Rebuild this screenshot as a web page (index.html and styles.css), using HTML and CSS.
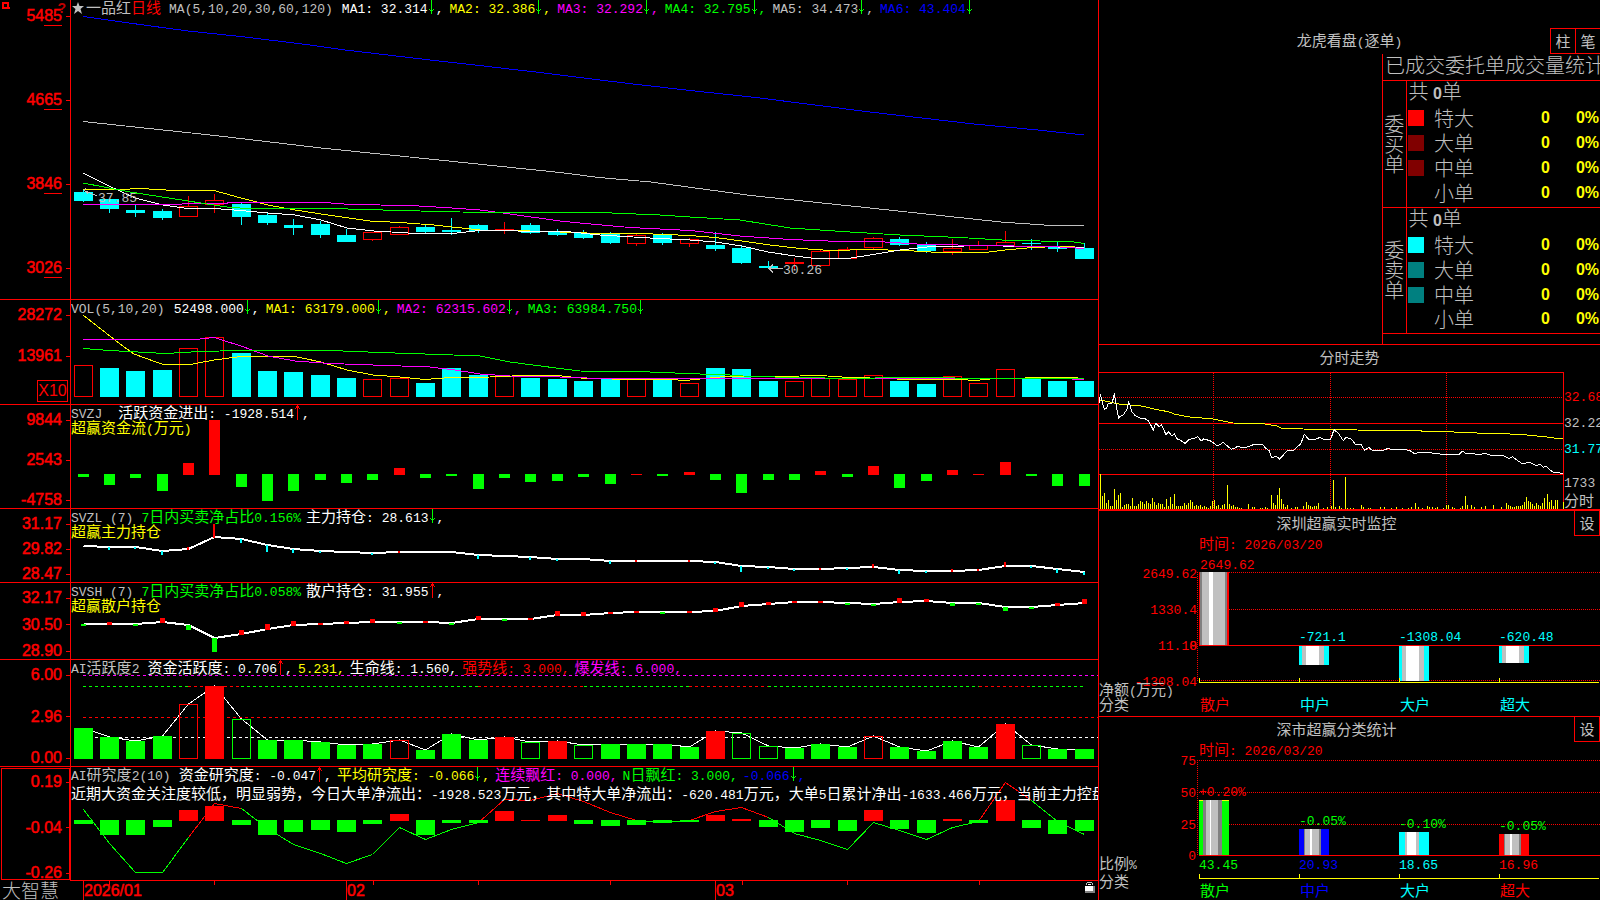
FILE: index.html
```html
<!DOCTYPE html>
<html lang="zh-CN">
<head>
<meta charset="utf-8">
<title>大智慧</title>
<link rel="stylesheet" href="styles.css">
</head>
<body>
<svg width="0" height="0" class="defs">
  <symbol id="down" viewBox="0 0 8 15"><path d="M3 0h1v14h-1zM1 9h1v1h1v1h1v-1h1v-1h1v1h-1v1h-1v2h-1v-2h-1v-1h-1z"/></symbol>
  <symbol id="up" viewBox="0 0 8 15"><path d="M3 0h1v15h-1zM2 1h3v2h-3zM1 3h1v1h-1zM5 3h1v1h-1z"/></symbol>
</svg>
<div class="terminal">
  <main class="charts">
    <section class="panel">
      <div class="axis underlined">
        <svg class="pin" viewBox="0 0 8 8"><path d="M1 1h5v5h-5zM6 6h2" fill="none" stroke="#f00" stroke-width="2"/></svg>
        <span class="help">?</span>
        <span class="tick">54<u>85</u></span><span class="tick">46<u>65</u></span><span class="tick">38<u>46</u></span><span class="tick">30<u>26</u></span>
      </div>
      <svg class="plot" id="price" viewBox="71 0 1027 299" preserveAspectRatio="none"></svg>
      <div class="legend">
        <div class="row averages silver">
          <span class="title stock"><svg class="star" viewBox="0 0 12 12"><path d="M6 0l1.500 4h4.500l-3.500 3 1.500 5-4-3-4 3 1.500-5-3.500-3h4.500z"/></svg><span class="cn">一品红<span class="red">日线</span></span></span>
          <span class="title">MA(5,10,20,30,60,120)</span>
          <span class="white">MA1: 32.314<svg class="arr green"><use href="#down"/></svg>,</span>
          <span class="yellow">MA2: 32.386<svg class="arr green"><use href="#down"/></svg>,</span>
          <span class="magenta">MA3: 32.292<svg class="arr green"><use href="#down"/></svg>,</span>
          <span class="green">MA4: 32.795<svg class="arr green"><use href="#down"/></svg>,</span>
          <span>MA5: 34.473<svg class="arr green"><use href="#down"/></svg>,</span>
          <span class="blue">MA6: 43.404<svg class="arr green"><use href="#down"/></svg></span>
        </div>
      </div>
    </section>

    <section class="panel">
      <div class="axis volume-axis">
        <span class="tick">28272</span><span class="tick">13961</span><span class="unit">X10</span>
      </div>
      <svg class="plot" id="volume" viewBox="71 300 1027 104" preserveAspectRatio="none"></svg>
      <div class="legend">
        <div class="row averages">
          <span class="title silver">VOL(5,10,20)</span>
          <span class="white">52498.000<svg class="arr green"><use href="#down"/></svg>,</span>
          <span class="yellow">MA1: 63179.000<svg class="arr green"><use href="#down"/></svg>,</span>
          <span class="magenta">MA2: 62315.602<svg class="arr green"><use href="#down"/></svg>,</span>
          <span class="green">MA3: 63984.750<svg class="arr green"><use href="#down"/></svg></span>
        </div>
      </div>
    </section>

    <section class="panel">
      <div class="axis"><span class="tick">9844</span><span class="tick">2543</span><span class="tick">-4758</span></div>
      <svg class="plot" id="flow" viewBox="71 405 1027 103" preserveAspectRatio="none"></svg>
      <div class="legend">
        <div class="row"><span class="title wide silver">SVZJ</span><span class="white"><span class="cn">活跃资金进出</span>: -1928.514<svg class="arr red"><use href="#up"/></svg>,</span></div>
        <div class="row yellow"><span><span class="cn">超赢资金流</span>(<span class="cn">万元</span>)</span></div>
      </div>
    </section>

    <section class="panel">
      <div class="axis"><span class="tick">31.17</span><span class="tick">29.82</span><span class="tick">28.47</span></div>
      <svg class="plot" id="main-hold" viewBox="71 509 1027 73" preserveAspectRatio="none"></svg>
      <div class="legend">
        <div class="row"><span class="title silver">SVZL (7)</span><span class="green">7<span class="cn">日内买卖净占比</span>0.156%</span><span class="white"><span class="cn">主力持仓</span>: 28.613<svg class="arr green"><use href="#down"/></svg>,</span></div>
        <div class="row yellow"><span class="cn">超赢主力持仓</span></div>
      </div>
    </section>

    <section class="panel">
      <div class="axis"><span class="tick">32.17</span><span class="tick">30.50</span><span class="tick">28.90</span></div>
      <svg class="plot" id="retail-hold" viewBox="71 583 1027 76" preserveAspectRatio="none"></svg>
      <div class="legend">
        <div class="row"><span class="title silver">SVSH (7)</span><span class="green">7<span class="cn">日内买卖净占比</span>0.058%</span><span class="white"><span class="cn">散户持仓</span>: 31.955<svg class="arr red"><use href="#up"/></svg>,</span></div>
        <div class="row yellow"><span class="cn">超赢散户持仓</span></div>
      </div>
    </section>

    <section class="panel">
      <div class="axis"><span class="tick">6.00</span><span class="tick">2.96</span><span class="tick">0.00</span></div>
      <svg class="plot" id="activity" viewBox="71 660 1027 106" preserveAspectRatio="none"></svg>
      <div class="legend">
        <div class="row">
          <span class="title silver">AI<span class="cn">活跃度</span>2</span>
          <span class="white"><span class="cn">资金活跃度</span>: 0.706<svg class="arr red"><use href="#up"/></svg>,</span>
          <span class="yellow">5.231,</span>
          <span class="white"><span class="cn">生命线</span>: 1.560,</span>
          <span class="red"><span class="cn">强势线</span>: 3.000,</span>
          <span class="magenta"><span class="cn">爆发线</span>: 6.000,</span>
        </div>
      </div>
    </section>

    <section class="panel last">
      <div class="axis selected"><span class="tick">0.19</span><span class="tick">-0.04</span><span class="tick">-0.26</span></div>
      <svg class="plot" id="research" viewBox="71 767 1027 113" preserveAspectRatio="none"></svg>
      <div class="legend roomy">
        <div class="row">
          <span class="title silver">AI<span class="cn">研究度</span>2(10)</span>
          <span class="white"><span class="cn">资金研究度</span>: -0.047<svg class="arr red"><use href="#up"/></svg>,</span>
          <span class="yellow"><span class="cn">平均研究度</span>: -0.066<svg class="arr green"><use href="#down"/></svg>,</span>
          <span class="magenta"><span class="cn">连续飘红</span>: 0.000,</span>
          <span class="green">N<span class="cn">日飘红</span>: 3.000,</span>
          <span class="blue">-0.066<svg class="arr green"><use href="#down"/></svg>,</span>
        </div>
        <div class="row white"><span><span class="cn">近期大资金关注度较低，明显弱势，今日大单净流出：</span>-1928.523<span class="cn">万元，其中特大单净流出：</span>-620.481<span class="cn">万元，大单</span>5<span class="cn">日累计净出</span>-1633.466<span class="cn">万元，当前主力控盘</span></span></div>
      </div>
    </section>

    <footer class="timeline">
      <span class="brand">大智慧</span>
      <svg class="plot" id="dates" viewBox="71 881 1027 19" preserveAspectRatio="none"></svg>
    </footer>
  </main>

  <aside class="side">
    <section class="orders">
      <header class="orders-head">
        <h2><span class="cn">龙虎看盘</span>(<span class="cn">逐单</span>)</h2>
        <div class="modes"><button type="button">柱</button><button type="button">笔</button></div>
      </header>
      <div class="stats-box">
        <table class="stats">
          <caption>已成交委托单成交量统计</caption>
          <colgroup><col class="c-side"><col class="c-mark"><col class="c-name"><col class="c-num"><col></colgroup>
          <tbody>
            <tr><th rowspan="5" class="side-name">委买单</th><td colspan="4" class="total">共 <b>0</b>单</td></tr>
            <tr><td><i class="mark buy"></i></td><td>特大</td><td class="num">0</td><td class="num pct">0%</td></tr>
            <tr><td><i class="mark buy-dim"></i></td><td>大单</td><td class="num">0</td><td class="num pct">0%</td></tr>
            <tr><td><i class="mark buy-dim"></i></td><td>中单</td><td class="num">0</td><td class="num pct">0%</td></tr>
            <tr><td></td><td>小单</td><td class="num">0</td><td class="num pct">0%</td></tr>
          </tbody>
          <tbody>
            <tr><th rowspan="5" class="side-name">委卖单</th><td colspan="4" class="total">共 <b>0</b>单</td></tr>
            <tr><td><i class="mark sell"></i></td><td>特大</td><td class="num">0</td><td class="num pct">0%</td></tr>
            <tr><td><i class="mark sell-dim"></i></td><td>大单</td><td class="num">0</td><td class="num pct">0%</td></tr>
            <tr><td><i class="mark sell-dim"></i></td><td>中单</td><td class="num">0</td><td class="num pct">0%</td></tr>
            <tr><td></td><td>小单</td><td class="num">0</td><td class="num pct">0%</td></tr>
          </tbody>
        </table>
      </div>
    </section>

    <section class="trend">
      <header class="trend-head"><h2 class="cn">分时走势</h2></header>
      <svg class="plot" id="intraday" viewBox="27 96 1395 411" preserveAspectRatio="none"></svg>
      <div class="scale">
        <span class="red">32.68</span><span>32.22</span><span class="cyan">31.77</span><span class="vol">1733</span><span class="cn">分时</span>
      </div>
    </section>

    <section class="monitor">
      <header><h2 class="cn">深圳超赢实时监控</h2><button type="button">设</button></header>
      <svg class="plot" id="netflow" viewBox="1099 536 501 180" preserveAspectRatio="xMinYMin meet"></svg>
    </section>

    <section class="share">
      <header><h2 class="cn">深市超赢分类统计</h2><button type="button">设</button></header>
      <svg class="plot" id="ratio" viewBox="1099 742 501 158" preserveAspectRatio="xMinYMin meet"></svg>
    </section>
  </aside>
</div>
<script src="charts.js"></script>
</body>
</html>
```

FILE: styles.css
```css
* { box-sizing: border-box; }

body {
  margin: 0;
  background: #000;
  color: #c0c0c0;
  font-family: "Liberation Mono", "Noto Sans CJK SC", monospace;
  font-size: 13px;
}

h2 { margin: 0; font-size: 13px; font-weight: 400; }
.cn, h2.cn { font-family: "Noto Sans CJK SC", sans-serif; font-size: 15px; font-weight: 400; }

.red { color: #f00; fill: #f00; }
.green { color: #0f0; fill: #0f0; }
.blue { color: #00f; }
.cyan { color: #0ff; }
.yellow { color: #ff0; }
.magenta { color: #f0f; }
.white { color: #fff; }
.silver { color: #c0c0c0; }

.defs { position: absolute; }

.terminal {
  display: grid;
  grid-template-columns: minmax(0, 1099fr) minmax(0, 501fr);
  grid-template-rows: minmax(0, 1fr);
  height: 100vh;
}

/* Indicator panels */
.charts {
  display: grid;
  grid-template-rows:
    minmax(0, 300fr) minmax(0, 105fr) minmax(0, 104fr) minmax(0, 74fr)
    minmax(0, 77fr) minmax(0, 107fr) minmax(0, 114fr) minmax(0, 19fr);
  border-right: 1px solid #f00;
  min-width: 0;
  min-height: 0;
}

.panel {
  display: grid;
  grid-template-columns: 71px minmax(0, 1fr);
  grid-template-rows: minmax(0, 1fr);
  min-height: 0;
  border-bottom: 1px solid #f00;
}

.panel.last { border-bottom: 0; }
.panel.last .legend { border-bottom: 1px solid #f00; }

.axis {
  position: relative;
  display: flex;
  flex-direction: column;
  align-items: flex-end;
  justify-content: space-between;
  padding-top: 7px;
  border-right: 1px solid #f00;
  color: #f00;
  font-family: "Liberation Sans", sans-serif;
  font-size: 16px;
}

.underlined { padding: 8px 0 23px; }
.selected { outline: 1px solid #f00; outline-offset: -2px; }

.tick {
  display: flex;
  align-items: center;
  height: 16px;
  line-height: 16px;
  -webkit-text-stroke: 0.5px #f00;
}

.tick::after {
  content: "";
  width: 4px;
  height: 1px;
  margin-left: 4px;
  background: #f00;
}

.tick u {
  text-decoration: none;
  height: 16px;
  box-shadow: 0 1px 0 #000, 0 2px 0 #f00;
}

.volume-axis { justify-content: flex-start; }
.volume-axis .tick + .tick { margin-top: 25px; }
.unit {
  width: 31px;
  height: 22px;
  margin: auto 2px 2px 0;
  border: 1px solid #f00;
  line-height: 20px;
  text-align: center;
}

.pin { position: absolute; left: 2px; top: 2px; width: 8px; height: 8px; }
.help {
  position: absolute;
  right: 4px;
  top: 1px;
  color: #c00000;
  font-weight: 700;
  font-size: 14px;
  line-height: 14px;
}

.plot {
  grid-area: 1 / 2;
  display: block;
  width: 100%;
  height: 100%;
  min-height: 0;
  shape-rendering: crispEdges;
  overflow: hidden;
}
.panel.last .plot { height: calc(100% - 1px); }

.legend {
  grid-area: 1 / 2;
  z-index: 1;
  overflow: hidden;
  white-space: nowrap;
}

.row {
  display: flex;
  align-items: baseline;
  gap: 5px;
  height: 15px;
  line-height: 13px;
}
.row::before { content: ""; width: 0; height: 13px; margin-right: -5px; }
.row.averages { gap: 6px; }
.row.averages::before { margin-right: -6px; }

.roomy .row + .row { margin-top: 4px; }
.title { margin-right: 3px; }
.title.wide { margin-right: 11px; }
.title.stock { margin-right: 2px; }
.star { width: 12px; height: 12px; margin: 0 2px 0 1px; fill: #c0c0c0; vertical-align: -1px; }
.arr { width: 8px; height: 15px; vertical-align: -2px; shape-rendering: crispEdges; }

.timeline {
  display: grid;
  grid-template-columns: 71px minmax(0, 1fr);
  grid-template-rows: minmax(0, 1fr);
  min-height: 0;
}

.brand {
  font-family: "Noto Sans CJK SC", sans-serif;
  font-weight: 300;
  font-size: 19px;
  line-height: 18px;
  padding-left: 2px;
}

svg text { font-family: "Liberation Mono", monospace; font-size: 13px; white-space: pre; }
svg .han { font-family: "Noto Sans CJK SC", sans-serif; font-size: 15px; }
svg .date { font-family: "Liberation Sans", sans-serif; font-size: 16px; stroke: #f00; stroke-width: 0.5px; }

/* Side column */
.side {
  display: grid;
  grid-template-rows: minmax(0, 345fr) minmax(0, 166fr) minmax(0, 206fr) minmax(0, 183fr);
  min-width: 0;
  min-height: 0;
}

.side button {
  height: 25px;
  padding: 0;
  background: #000;
  border: 1px solid #f00;
  color: #c0c0c0;
  font-family: "Noto Sans CJK SC", sans-serif;
  font-size: 15px;
  line-height: 20px;
}

.orders {
  display: flex;
  flex-direction: column;
  padding-top: 28px;
  border-bottom: 1px solid #f00;
  overflow: hidden;
}

.orders-head {
  display: grid;
  grid-template-columns: 1fr auto 1fr;
  align-items: center;
  height: 26px;
  flex: none;
}
.orders-head h2 { grid-column: 2; line-height: 20px; }
.modes { grid-column: 3; display: flex; justify-content: flex-end; }
.modes button { width: 25px; height: 26px; border-right: 0; }

.stats-box {
  align-self: flex-end;
  width: 218px;
  flex: 1;
  border-left: 1px solid #f00;
}

.stats {
  width: 100%;
  border-collapse: collapse;
  table-layout: fixed;
  font-family: "Noto Sans CJK SC", sans-serif;
  font-weight: 300;
  font-size: 20px;
  line-height: 20px;
}
.stats caption { height: 26px; padding-left: 2px; line-height: 22px; text-align: left; white-space: nowrap; }
.stats tbody { border-top: 1px solid #f00; border-bottom: 1px solid #f00; }
.stats tr { height: 25px; }
.stats td, .stats th { padding: 0; height: 25px; font-weight: 300; white-space: nowrap; }
.stats td { padding-bottom: 3px; }
.stats .side-name {
  border-right: 1px solid #f00;
  white-space: normal;
  word-break: break-all;
}
.stats .total { padding-left: 2px; }
.c-side { width: 23px; }
.c-mark { width: 28px; }
.c-name { width: 60px; }
.c-num { width: 56px; }
.stats .num, .stats b { font-family: "Liberation Sans", sans-serif; font-weight: 700; font-size: 16px; }
.stats .num { color: #ff0; text-align: right; }
.stats .pct { padding-right: 6px; }
.mark { display: block; width: 16px; height: 16px; margin-left: 1px; }
.buy { background: #f00; }
.buy-dim { background: #800000; }
.sell { background: #0ff; }
.sell-dim { background: #008080; }

.trend {
  display: grid;
  grid-template-columns: minmax(0, 1fr) 36px;
  grid-template-rows: 27px minmax(0, 1fr);
  border-bottom: 2px solid #f00;
}

.trend-head { grid-column: 1 / 3; text-align: center; line-height: 24px; }
.trend .plot { grid-area: 2 / 1; }

.scale {
  grid-area: 2 / 2;
  display: flex;
  flex-direction: column;
  gap: 10px;
  padding-top: 18px;
  line-height: 16px;
  overflow: hidden;
}
.scale span { height: 16px; }
.scale .vol { margin-top: 8px; }
.scale .cn { margin-top: -10px; }

.monitor, .share {
  display: grid;
  grid-template-columns: minmax(0, 1fr);
  grid-template-rows: 25px minmax(0, 1fr);
}
.monitor { border-bottom: 1px solid #f00; }
.monitor header, .share header { display: flex; }
.monitor h2, .share h2 { flex: 1; text-align: center; line-height: 24px; }
.monitor button, .share button { width: 26px; border-top: 0; }
.monitor .plot, .share .plot { grid-area: 2 / 1; }
```

FILE: charts.js
```js
const NS = "http://www.w3.org/2000/svg";
const RED = "#f00", GREEN = "#0f0", CYAN = "#0ff", BLUE = "#00f";
const YELLOW = "#ff0", MAGENTA = "#f0f", WHITE = "#fff", SILVER = "#c0c0c0", GRAY = "#808080";

const byId = id => document.getElementById(id);
const cx = i => Math.floor(83.2 + 26.34 * i);

function add(svg, tag, attrs, content) {
  const el = document.createElementNS(NS, tag);
  for (const key in attrs) el.setAttribute(key, attrs[key]);
  if (content !== undefined) el.textContent = content;
  svg.appendChild(el);
  return el;
}
const box = (svg, x, y, w, h, fill) => add(svg, "rect", { x, y, width: w, height: h, fill });
const hollow = (svg, x, y, w, h, stroke, fill = "none") =>
  add(svg, "rect", { x: x + 0.5, y: y + 0.5, width: w - 1, height: h - 1, stroke, fill });
const line = (svg, points, stroke, width = 1) =>
  add(svg, "polyline", { points, stroke, fill: "none", "stroke-width": width });
const dashed = (svg, x1, y1, x2, y2, stroke, dash) =>
  add(svg, "line", { x1, y1, x2, y2, stroke, "stroke-dasharray": dash });
const series = ys => ys.map((y, i) => cx(i) + 0.5 + "," + y).join(" ");
const label = (svg, x, y, text, fill, cls = "", anchor = "start") =>
  add(svg, "text", { x, y, fill, class: cls, "text-anchor": anchor }, text);

/* Candles: colour, body top, body bottom, high, low */
const candles = [
  "c 192 201 190 202", "c 199 209 199 213", "c 210 213 205 217", "c 211 218 209 220", "r 206 217 196 217",
  "r 200 205 194 213", "c 204 217 202 225", "c 215 223 213 225", "c 225 228 219 235", "c 224 235 221 238",
  "c 235 242 229 242", "r 232 240 232 241", "r 227 235 226 235", "c 227 232 225 233", "c 230 232 218 235",
  "c 225 231 224 233", "r 229 230 222 234", "c 225 233 223 234", "c 232 235 229 236", "c 233 238 230 239",
  "c 234 243 232 244", "r 235 244 233 246", "c 234 243 233 245", "r 239 244 238 247", "c 245 249 232 251",
  "c 248 263 246 264", "c 266 268 261 268", "f 262 264 258 269", "r 251 266 249 267", "r 249 259 247 259",
  "r 238 248 237 249", "c 239 245 237 246", "c 244 251 242 253", "r 248 252 239 255", "r 245 250 241 250",
  "r 242 246 231 246", "c 243 244 239 250", "c 247 249 242 252", "c 248 259 243 259"
];
const price = byId("price");
candles.forEach((row, i) => {
  const [kind, ...v] = row.split(" ");
  const [top, bottom, high, low] = v.map(Number);
  const color = kind === "c" ? CYAN : RED;
  box(price, cx(i), high, 1, low - high, color);
  if (kind === "r" && bottom - top > 2) hollow(price, cx(i) - 9, top, 19, bottom - top, color, "#000");
  else box(price, cx(i) - 9, top, 19, bottom - top, color);
});
line(price, "83,16.5 140,24.5 188,31 245,37 310,45 345,50 430,60 475,65 518,70 540,72.500 600,80 633,84 695,91 756,97.500 870,112 974,124 1038,130 1084,135", BLUE);
line(price, "83,121.500 215,135.500 321,148 434,159.500 560,172.500 599,177.500 651,182 751,195.500 870,208 1001,222 1051,225.500 1084,225.500", SILVER);
line(price, "83,189.500 120,189.500 140,188.500 175,190.500 214,190.500 241,198 268,205 295,210 321,214 370,221 400,222.500 434,225 480,230 500,230.500 530,231 560,232 600,233.500 640,233.500 690,235.500 715,237.500 742,241 770,245 800,248.500 830,250.500 870,249.500 905,250.500 940,252.500 985,252.500 1005,250 1027,248 1055,246.500 1070,246.500 1084,248", YELLOW);
line(price, "83,173 109,186 135,198 163,205 188,208.500 214,208.500 241,210.500 268,213 295,215 321,220 347,228 374,231 400,232.500 416,233.500 452,233.500 480,230.500 506,230.500 530,231.500 566,231.500 600,235 650,238 690,240 715,242 742,246 768,252 795,256 815,258.500 848,258.500 870,255 900,250 927,247 940,246.500 990,245.500 1016,246.500 1058,247 1084,248", WHITE);
line(price, "83,204.500 170,204.500 195,203.500 225,203.500 230,202.500 325,202.500 350,204.500 410,205.500 445,207.500 480,210 510,214 560,221 580,223 630,227.500 690,230.500 740,236 790,239.500 840,241.500 885,242 925,244.500 990,245.500 1060,247 1084,248.500", MAGENTA);
line(price, "83,183 130,192 188,201 230,207.500 250,208.500 330,208.500 400,210.500 460,212 560,212.500 600,212.500 660,215 690,217 740,220 790,228 850,232 900,235 960,237.500 1010,240.500 1070,241.500 1084,243.500", GREEN);
line(price, "84,190.500 90,193 97,196", SILVER);
line(price, "86,188 84,190 88,194", SILVER);
label(price, 98, 202, "37.85", SILVER);
line(price, "769,268.500 783,268.500", SILVER);
line(price, "773,264.500 769,268.500 773,272.500", SILVER);
label(price, 783, 274, "30.26", SILVER);

/* Volume */
const volume = byId("volume");
const volTops = [365, 368, 371, 370, 348, 337, 353, 371, 372, 375, 378, 379, 378, 383, 368, 375, 376, 378, 379, 381, 378, 379, 380, 383, 368, 369, 381, 381, 378, 379, 375, 381, 384, 376, 383, 369, 378, 381, 381];
volTops.forEach((top, i) => {
  const down = i > 0 && candles[i][0] === "c";
  if (down) box(volume, cx(i) - 9, top, 19, 397 - top, CYAN);
  else hollow(volume, cx(i) - 9, top, 19, 397 - top, RED);
});
line(volume, "83,315 120,344 134,354 163,364.500 190,364.500 214,360 241,356.500 295,356.500 321,362 347,370 373,375 400,377 425,379.500 450,377.500 490,377 512,376 550,375.500 562,376 580,378 598,378.500 625,379.500 670,379.500 685,380.500 700,379 720,377 765,376.500 800,376 820,375.500 842,377 870,378 910,379.500 960,379.500 975,380.500 990,379 1005,378.500 1045,377.500 1072,377.500 1084,378.500", YELLOW);
line(volume, "83,339.500 195,339.500 214,337.500 241,346 268,356 295,361 330,363.500 430,367 455,370 480,374 510,376 560,377 600,378.500 730,378.500 760,378.500 1060,378.500 1084,379.500", MAGENTA);
line(volume, "83,348.500 110,350.500 165,353.500 200,351.500 240,350.500 330,350.500 380,352.500 440,354.500 480,356 510,362 560,368.500 580,371 650,372 700,374 730,375 750,376.500 800,377.500 850,378.500 900,377.500 940,377.500 970,378.500 1084,378.500", GREEN);

/* Diverging bars around a zero line */
function diverging(svg, zero, half, ends) {
  ends.forEach((end, i) => {
    const up = end <= zero;
    box(svg, cx(i) - half, up ? end : zero, half * 2 + 1, up ? zero + 1 - end : end - zero, up ? RED : GREEN);
  });
}
diverging(byId("flow"), 474, 5, [477, 485, 478, 491, 463, 420, 487, 501, 491, 480, 483, 480, 468, 478, 476, 489, 478, 482, 481, 477, 484, 474, 476, 472, 480, 493, 480, 480, 471, 477, 466, 488, 481, 470, 474, 462, 476, 486, 486]);

/* Holding curves with change marks: negative marks rise above the curve */
function holding(svg, ys, marks, width, rise, fall) {
  line(svg, series(ys), WHITE, 2);
  marks.forEach((m, i) => {
    if (m) box(svg, cx(i) - (width >> 1), m < 0 ? Math.round(ys[i]) + m : Math.round(ys[i]), width, Math.abs(m) + 1, m < 0 ? rise : fall);
  });
}
holding(byId("main-hold"),
  [546, 547, 547, 551, 549, 537, 539, 545, 549, 551, 552, 553, 552, 552, 552, 555, 556, 557, 559, 559, 561, 561, 561, 561, 562, 566, 567, 569, 569, 568, 567, 570, 571, 571, 570, 566, 566, 569, 572],
  [0, 2, 1, 3, -2, -13, 3, 6, 3, 1, 0, 1, -1, 0, 0, 3, 0, 2, 1, 0, 2, -1, 0, -1, 1, 5, 1, 1, -1, 1, -3, 3, 1, -2, -1, -4, 1, 3, 2], 2, RED, CYAN);
holding(byId("retail-hold"),
  [624, 624, 624, 622, 625, 638, 634, 629, 625, 624, 623, 622, 622, 622, 623, 619, 619, 619, 615, 615, 613, 612, 612, 612, 611, 606, 604, 602, 602, 603, 604, 602, 601, 603, 603, 607, 607, 605, 603],
  [1, -2, 1, -4, 4, 13, -4, -5, -4, -1, -2, -3, 1, -1, 1, -3, 1, -1, -4, -3, -1, -1, 1, -1, -3, -4, -2, -1, -1, 1, 1, -4, -2, 2, 1, 3, 1, -2, -4], 5, RED, GREEN);

/* Activity */
const activity = byId("activity");
const actTops = [728, 737, 741, 736, 704, 686, 719, 740, 740, 742, 745, 744, 740, 750, 734, 740, 737, 742, 741, 745, 744, 744, 744, 747, 731, 733, 746, 748, 744, 747, 736, 747, 751, 741, 747, 724, 745, 749, 749];
const actKinds = "GGGGrRgGGGGGrGGGRgRgGGGGRggGGGrGGGGRgGG";
dashed(activity, 83, 737.5, 1098, 737.5, WHITE, "3 3");
line(activity, series(actTops), WHITE);
dashed(activity, 83, 675.5, 1098, 675.5, MAGENTA, "3 3");
dashed(activity, 83, 717.5, 1098, 717.5, RED, "3 3");
const spans = [83, 188, 241, 478, 584, 689, 768, 979, 1032, 1084];
[GREEN, RED, GREEN, RED, GREEN, RED, GREEN, RED, GREEN].forEach((color, i) =>
  dashed(activity, spans[i], 686.5, spans[i + 1], 686.5, color, "3 3"));
actTops.forEach((top, i) => {
  const kind = actKinds[i];
  const color = kind.toLowerCase() === "r" ? RED : GREEN;
  if (kind === kind.toUpperCase()) box(activity, cx(i) - 9, top, 19, 759 - top, color);
  else hollow(activity, cx(i) - 9, top, 19, 759 - top, color);
});

/* Research */
const research = byId("research");
const resLine = [809, 843, 872, 872, 837, 803, 808, 828, 844, 853, 863, 854, 827, 839, 829, 822, 799, 800, 793, 801, 812, 820, 822, 820, 811, 807, 817, 833, 840, 849, 822, 830, 839, 827, 821, 782, 800, 821, 834];
[[0, 4, GREEN], [4, 6, RED], [6, 15, GREEN], [15, 21, RED], [21, 23, GREEN], [23, 26, RED], [26, 34, GREEN], [34, 36, RED], [36, 38, GREEN]].forEach(([a, b, color]) => {
  let points = "";
  for (let i = a; i <= b; i++) points += cx(i) + ".5," + resLine[i] + ".5 ";
  line(research, points, color);
});
diverging(research, 820, 9, [824, 835, 835, 827, 810, 806, 825, 835, 832, 830, 832, 824, 814, 835, 823, 823, 811, 820, 815, 824, 826, 825, 823, 822, 815, 819, 827, 832, 828, 831, 810, 829, 833, 819, 823, 800, 828, 834, 831]);

/* Date axis */
const dates = byId("dates");
[[83, "2026/01"], [346, "02"], [715, "03"]].forEach(([x, text]) => {
  box(dates, x, 881, 1, 19, RED);
  label(dates, x + 1, 896, text, RED, "date");
});
[109, 214, 373, 478, 610, 742, 847, 979].forEach(x => box(dates, x, 881, 1, 4, RED));
add(dates, "path", { d: "M1087 882h5v1h-5zM1086 883h1v2h-1zM1092 883h1v2h-1z", fill: SILVER });
add(dates, "path", { d: "M1085 886h10v7h-10z", fill: GRAY });
add(dates, "path", { d: "M1085 886h8v5h-8zM1088 884h3v1h-3z", fill: WHITE });

/* Intraday trend, three units to a pixel */
const intra = byId("intraday");
const W = 3;
const dot = (x1, y1, x2, y2) => add(intra, "line", { x1, y1, x2, y2, stroke: RED, "stroke-width": W, "stroke-dasharray": "3 3" });
dot(27, 172.5, 1420, 172.5);
dot(27, 328.5, 1420, 328.5);
[370.5, 721.5, 1069.5].forEach(x => dot(x, 99, x, 507));
box(intra, 27, 96, 1395, 3, RED);
box(intra, 27, 249, 1395, 3, RED);
box(intra, 27, 402, 1395, 3, RED);
box(intra, 1419, 96, 3, 411, RED);
const opening = [106, 40, 49, 19, 28, 9, 9, 61, 28, 43, 49, 6, 13, 16, 16, 9, 34, 10, 10, 16, 25, 22, 16, 25, 19, 16, 34, 22, 13, 19, 16, 16, 7, 31, 10, 37, 16, 46, 10, 9, 9, 10, 19, 13, 19, 28, 22, 10, 13, 10, 13, 7, 10, 7, 3, 10, 25, 28, 10, 13, 3, 13, 16];
opening.forEach((h, i) => box(intra, 30 + 6 * i, 507 - h, 3, h, YELLOW));
const later = "412:73 418:16 424:10 430:13 436:6 442:6 448:4 454:3 475:16 487:6 493:6 511:4 517:4 526:6 532:3 544:43 550:19 556:13 562:43 568:64 574:31 580:16 586:5 592:13 604:3 616:7 622:5 640:8 649:22 655:13 661:10 667:7 673:9 679:9 685:19 700:3 712:5 724:10 730:88 736:5 748:10 754:4 766:97 772:4 781:4 790:3 814:13 820:7 835:3 841:4 871:7 883:7 905:3 919:7 937:4 955:4 964:6 976:19 985:7 997:3 1012:10 1018:5 1027:7 1036:4 1042:5 1060:3 1069:13 1075:13 1087:7 1093:4 1111:4 1117:9 1126:40 1132:13 1144:13 1153:6 1174:7 1186:10 1210:13 1234:6 1249:19 1255:13 1261:10 1267:7 1273:5 1279:9 1285:9 1291:10 1297:13 1303:22 1309:37 1315:25 1321:22 1327:16 1333:10 1339:19 1345:13 1351:10 1357:19 1363:34 1372:46 1378:22 1384:28 1390:10 1396:28 1402:28 1420:22";
later.split(" ").forEach(pair => {
  const [x, h] = pair.split(":").map(Number);
  box(intra, Math.floor(x / 3) * 3, 507 - h, 3, h, YELLOW);
});
line(intra, "28,180 60,186 90,193 150,197 200,209 235,215 255,223 300,231 370,237 430,249 520,251 560,258 575,265 640,267 800,270 955,272 1070,275 1160,279 1260,282 1310,285 1370,291 1400,295 1420,296", YELLOW, W);
line(intra, "28,190 31,163 35,180 40,200 44,208 50,205 55,190 62,192 67,188 73,160 77,185 82,215 86,234 92,228 100,224 110,210 116,188 120,195 125,215 135,226 150,234 165,236 175,243 185,260 190,271 197,250 208,260 214,255 222,270 228,285 235,275 246,288 253,282 262,297 272,301 285,310 297,298 312,296 323,290 334,303 341,297 360,302 372,310 383,318 400,307 412,318 424,328 436,324 442,319 460,323 475,320 490,314 518,314 527,325 538,332 544,352 560,350 569,357 580,345 592,331 612,330 620,322 632,312 643,283 655,297 672,300 690,292 705,300 722,298 732,269 745,280 760,302 768,292 785,298 797,314 812,312 824,331 836,322 845,330 880,331 894,325 912,330 940,328 960,332 972,340 1000,337 1040,340 1060,344 1105,345 1117,333 1128,341 1150,341 1165,345 1185,340 1200,345 1240,347 1257,356 1268,350 1280,360 1295,370 1320,368 1340,378 1350,372 1360,382 1367,378 1380,390 1390,397 1418,400", WHITE, W);

/* Cylinder bars: bands of [width, colour] from left to right */
function cylinder(svg, x, top, bottom, bands) {
  bands.forEach(([w, color]) => {
    box(svg, x, top, w, bottom - top, color);
    x += w;
  });
}
const cyanBands = [[3, CYAN], [4, SILVER], [13, WHITE], [5, SILVER], [5, CYAN]];

const net = byId("netflow");
label(net, 1199, 549, "时间", RED, "han");
label(net, 1229, 549, ": 2026/03/20", RED);
label(net, 1200, 569, "2649.62", RED);
[["2649.62", 578], ["1330.4", 614], ["11.18", 650], ["0", 650], ["-1308.04", 686]].forEach(([t, y]) =>
  label(net, 1197, y, t, RED, "", "end"));
dashed(net, 1197.5, 572, 1197.5, 680, RED, "1 1");
dashed(net, 1229, 572.5, 1600, 572.5, RED, "1 1");
dashed(net, 1229, 609.5, 1600, 609.5, RED, "1 1");
dashed(net, 1197, 680.5, 1600, 680.5, RED, "1 1");
cylinder(net, 1199, 572, 645, [[1, RED], [2, GRAY], [7, SILVER], [4, WHITE], [12, SILVER], [2, GRAY], [2, RED]]);
box(net, 1199, 645, 401, 1, RED);
[[1299, 665, "-721.1"], [1399, 681, "-1308.04"], [1499, 663, "-620.48"]].forEach(([x, bottom, t]) => {
  cylinder(net, x, 646, bottom, cyanBands);
  label(net, x, 641, t, CYAN);
});
box(net, 1199, 682, 400, 1, YELLOW);
[["散户", RED], ["中户", CYAN], ["大户", CYAN], ["超大", CYAN]].forEach(([t, color], i) => {
  box(net, 1199 + 100 * i, 678, 1, 4, YELLOW);
  label(net, 1200 + 100 * i, 710, t, color, "han");
});
label(net, 1099, 695, "净额", SILVER, "han");
label(net, 1129, 695, "(", SILVER);
label(net, 1136, 695, "万元", SILVER, "han");
label(net, 1166, 695, ")", SILVER);
label(net, 1099, 710, "分类", SILVER, "han");

const ratio = byId("ratio");
label(ratio, 1199, 755, "时间", RED, "han");
label(ratio, 1229, 755, ": 2026/03/20", RED);
[["75", 765], ["50", 797], ["25", 829], ["0", 860]].forEach(([t, y]) => label(ratio, 1196, y, t, RED, "", "end"));
dashed(ratio, 1197.5, 760, 1197.5, 856, RED, "1 1");
[760.5, 792.5, 824.5].forEach(y => dashed(ratio, 1197, y, 1600, y, RED, "1 1"));
const stripes = (edge, a, b, c, d, e, f, g) => [[a, edge], [b, GRAY], [c, SILVER], [d, WHITE], [e, SILVER], [f, GRAY], [g, edge]];
[
  [800, 796, "+0.20%", RED, "43.45", "散户", GREEN, stripes(GREEN, 4, 3, 4, 1, 7, 4, 7)],
  [829, 825, "-0.05%", GREEN, "20.93", "中户", BLUE, stripes(BLUE, 5, 1, 5, 2, 7, 2, 8)],
  [832, 828, "-0.10%", GREEN, "18.65", "大户", CYAN, [[6, CYAN], [2, SILVER], [9, WHITE], [3, SILVER], [10, CYAN]]],
  [834, 830, "-0.05%", GREEN, "16.96", "超大", RED, stripes(RED, 5, 1, 5, 2, 7, 2, 8)]
].forEach(([top, base, change, changeColor, value, name, color, bands], i) => {
  const x = 1199 + 100 * i;
  cylinder(ratio, x, top, 855, bands);
  label(ratio, x, base, change, changeColor);
  label(ratio, x, 869, value, color);
  label(ratio, x + 1, 896, name, color, "han");
  box(ratio, x, 874, 1, 4, YELLOW);
});
box(ratio, 1199, 800, 4, 1, YELLOW);
box(ratio, 1222, 800, 7, 1, YELLOW);
box(ratio, 1199, 855, 401, 1, RED);
box(ratio, 1199, 878, 400, 1, YELLOW);
label(ratio, 1099, 869, "比例", SILVER, "han");
label(ratio, 1129, 869, "%", SILVER);
label(ratio, 1099, 887, "分类", SILVER, "han");
```
